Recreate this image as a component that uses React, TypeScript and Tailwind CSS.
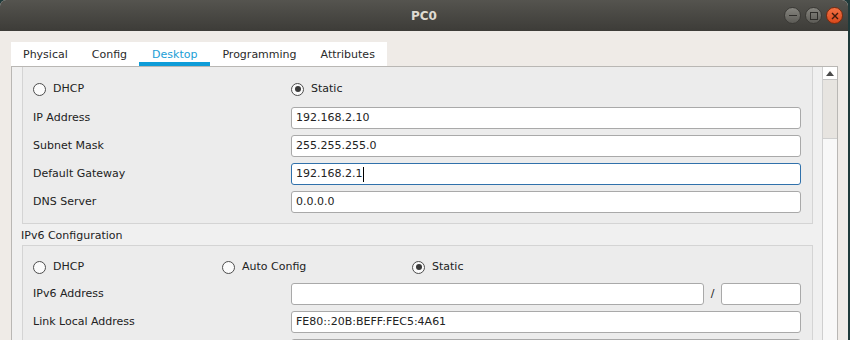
import type { ReactNode } from "react";

const font = { fontFamily: '"DejaVu Sans", Verdana, sans-serif' };

function Radio({ checked, label }: { checked?: boolean; label: string }) {
  return (
    <div className="flex h-[22px] items-center gap-[7px]">
      <span className="flex h-[13px] w-[13px] items-center justify-center rounded-full border border-[#4d4d4d] bg-[#fbfbfb]">
        {checked && <span className="h-[6px] w-[6px] rounded-full bg-[#3a3a3a]" />}
      </span>
      <span>{label}</span>
    </div>
  );
}

function Field({
  value = "",
  focused,
  className = "",
}: {
  value?: string;
  focused?: boolean;
  className?: string;
}) {
  return (
    <div
      className={`flex h-[22px] items-center rounded-[3px] border bg-white pl-[4px] ${
        focused ? "border-[#3071ab]" : "border-[#a9a9a9]"
      } ${className}`}
    >
      <span>{value}</span>
      {focused && <span className="ml-[1px] h-[15px] w-[1px] bg-black" />}
    </div>
  );
}

function Row({ label, children }: { label: string; children: ReactNode }) {
  return (
    <div className="flex h-[22px] items-center">
      <span className="w-[258px] shrink-0 pt-[1px]">{label}</span>
      <div className="flex flex-1 items-center">{children}</div>
    </div>
  );
}

function WinButton({ kind }: { kind: "min" | "max" | "close" }) {
  if (kind === "close") {
    return (
      <div className="flex h-[17px] w-[17px] items-center justify-center rounded-full border border-[#7a2a0e] bg-gradient-to-b from-[#f37143] to-[#d9481a]">
        <svg width="8" height="8" viewBox="0 0 8 8">
          <path d="M1 1 L7 7 M7 1 L1 7" stroke="#3c1a0c" strokeWidth="1.4" />
        </svg>
      </div>
    );
  }
  return (
    <div className="flex h-[17px] w-[17px] items-center justify-center rounded-full border border-[#3a3935] bg-gradient-to-b from-[#86857f] to-[#5c5b56]">
      {kind === "min" ? (
        <span className="h-[1.5px] w-[8px] bg-[#2e2d2a]" />
      ) : (
        <span className="h-[8px] w-[8px] border-[1.5px] border-[#2e2d2a]" />
      )}
    </div>
  );
}

const tabs = ["Physical", "Config", "Desktop", "Programming", "Attributes"];

export default function App() {
  return (
    <div
      className="flex h-[340px] w-[850px] overflow-hidden bg-[#1f3a3a] text-[11px] text-[#222]"
      style={font}
    >
      <div className="flex h-[340px] w-[848px] shrink-0 flex-col overflow-hidden rounded-t-[6px] bg-[#efebe7]">
        {/* title bar */}
        <div className="relative flex h-[31px] shrink-0 items-center justify-center bg-gradient-to-b from-[#55544f] to-[#3d3c38]">
          <span className="text-[12px] font-bold text-[#dfdbd2]">PC0</span>
          <div className="absolute right-[5px] top-[7px] flex gap-[4px]">
            <WinButton kind="min" />
            <WinButton kind="max" />
            <WinButton kind="close" />
          </div>
        </div>

        {/* tabs */}
        <div className="flex pl-[11px] pt-[11px]">
          <div className="flex h-[24px] bg-white">
            {tabs.map((t) => (
              <div
                key={t}
                className={`relative flex items-center pt-[2px] ${
                  t === "Desktop" ? "px-[13px] text-[#1a9ed6]" : "px-[12px] text-[#2a2a2a]"
                }`}
              >
                {t}
                {t === "Desktop" && (
                  <span className="absolute bottom-0 left-0 right-0 h-[4px] bg-[#0e9cd8]" />
                )}
              </div>
            ))}
          </div>
        </div>

        {/* panel */}
        <div className="ml-[11px] mr-[10px] flex flex-1 border border-b-0 border-[#b9b7b4] bg-[#f0f0f0]">
          <div className="flex flex-1 flex-col pl-[10px] pr-[9px]">
            {/* IPv4 group (scrolled, top cut off) */}
            <div className="flex flex-col border-x border-b border-[#d4d4d4] bg-[#ececec] pb-[10px] pl-[10px] pr-[11px] pt-[10px]">
              <div className="flex pt-[1px]">
                <div className="w-[258px]">
                  <Radio label="DHCP" />
                </div>
                <Radio checked label="Static" />
              </div>
              <div className="mt-[7px] flex flex-col gap-[6px]">
                <Row label="IP Address">
                  <Field className="flex-1" value="192.168.2.10" />
                </Row>
                <Row label="Subnet Mask">
                  <Field className="flex-1" value="255.255.255.0" />
                </Row>
                <Row label="Default Gateway">
                  <Field className="flex-1" value="192.168.2.1" focused />
                </Row>
                <Row label="DNS Server">
                  <Field className="flex-1" value="0.0.0.0" />
                </Row>
              </div>
            </div>

            <div className="-ml-[1px] flex h-[21px] items-center pt-[3px]">IPv6 Configuration</div>

            {/* IPv6 group */}
            <div className="flex flex-col border border-[#d4d4d4] bg-[#ececec] pl-[10px] pr-[11px] pt-[10px]">
              <div className="flex">
                <div className="w-[189px]">
                  <Radio label="DHCP" />
                </div>
                <div className="w-[190px]">
                  <Radio label="Auto Config" />
                </div>
                <Radio checked label="Static" />
              </div>
              <div className="mt-[5px] flex flex-col gap-[6px]">
                <Row label="IPv6 Address">
                  <Field className="flex-1" />
                  <span className="w-[17px] text-center">/</span>
                  <Field className="w-[80px]" />
                </Row>
                <Row label="Link Local Address">
                  <Field className="flex-1" value="FE80::20B:BEFF:FEC5:4A61" />
                </Row>
                <div className="flex h-[22px]">
                  <span className="w-[258px] shrink-0" />
                  <Field className="flex-1" />
                </div>
              </div>
            </div>
          </div>

          {/* scrollbar */}
          <div className="flex w-[15px] flex-col border-l border-[#cfcfcf] bg-[#f8f8f8]">
            <div className="flex h-[13px] items-center justify-center border-b border-[#c4c4c4] bg-white">
              <svg width="8" height="5" viewBox="0 0 8 5">
                <path d="M0 5 L4 0 L8 5 Z" fill="#4a4a4a" />
              </svg>
            </div>
            <div className="h-[59px] border-b border-[#cfcfcf] bg-[#e7e4e0]" />
          </div>
        </div>
      </div>
    </div>
  );
}
